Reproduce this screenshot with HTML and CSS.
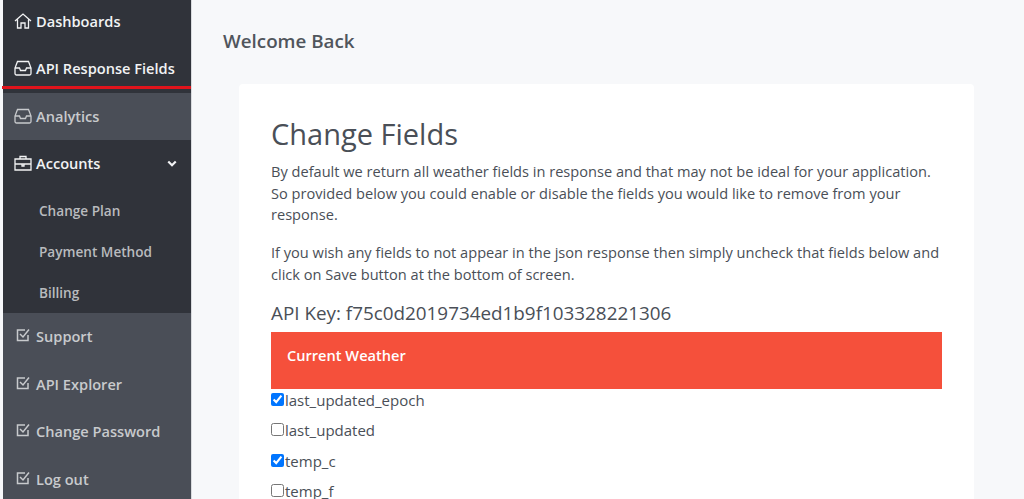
FILE: index.html
```html
<!DOCTYPE html>
<html lang="en">
<head>
<meta charset="UTF-8">
<meta name="viewport" content="width=device-width, initial-scale=1.0">
<title>Change Fields</title>
<link rel="stylesheet" href="styles.css">
</head>
<body>

<div class="container">
    <div class="sidebar">
        <a class="nav-item dark">
            <svg class="icon" viewBox="0 0 18 16"><path d="M1 8 9 1l8 7M3.500 6.500V15h3.500v-5h4v5h3.500V6.500"/></svg>
            <span>Dashboards</span>
        </a>
        <a class="nav-item dark active">
            <svg class="icon" viewBox="0 0 18 16"><path d="M3.500 1.500h11L17 8v5.500a1.500 1.500 0 0 1-1.500 1.500h-13A1.500 1.500 0 0 1 1 13.500V8zM1 8h4.500l1 2.500h5l1-2.500H17"/></svg>
            <span>API Response Fields</span>
        </a>
        <a class="nav-item muted">
            <svg class="icon" viewBox="0 0 18 16"><path d="M3.500 1.500h11L17 8v5.500a1.500 1.500 0 0 1-1.500 1.500h-13A1.500 1.500 0 0 1 1 13.500V8zM1 8h4.500l1 2.500h5l1-2.500H17"/></svg>
            <span>Analytics</span>
        </a>
        <a class="nav-item dark">
            <svg class="icon" viewBox="0 0 18 16"><path d="M1 4h16v11H1zM6 4V1.500h6V4M1 9h16M8 9v2h2V9"/></svg>
            <span>Accounts</span>
            <svg class="chevron" viewBox="0 0 12 8"><path d="M1.500 1.500 6 6l4.500-4.500"/></svg>
        </a>
        <div class="submenu">
            <a>Change Plan</a>
            <a>Payment Method</a>
            <a>Billing</a>
        </div>
        <a class="nav-item muted">
            <svg class="icon check" viewBox="0 0 14 14"><path d="M12 7v5.500H1.500V2H9M4 6l3 3 6-7.500"/></svg>
            <span>Support</span>
        </a>
        <a class="nav-item muted">
            <svg class="icon check" viewBox="0 0 14 14"><path d="M12 7v5.500H1.500V2H9M4 6l3 3 6-7.500"/></svg>
            <span>API Explorer</span>
        </a>
        <a class="nav-item muted">
            <svg class="icon check" viewBox="0 0 14 14"><path d="M12 7v5.500H1.500V2H9M4 6l3 3 6-7.500"/></svg>
            <span>Change Password</span>
        </a>
        <a class="nav-item muted">
            <svg class="icon check" viewBox="0 0 14 14"><path d="M12 7v5.500H1.500V2H9M4 6l3 3 6-7.500"/></svg>
            <span>Log out</span>
        </a>
    </div>

    <div class="main">
        <h4 class="welcome">Welcome Back</h4>
        <div class="card">
            <h2 class="title">Change Fields</h2>
            <p>By default we return all weather fields in response and that may not be ideal for your application. So provided below you could enable or disable the fields you would like to remove from your response.</p>
            <p>If you wish any fields to not appear in the json response then simply uncheck that fields below and click on Save button at the bottom of screen.</p>
            <h5 class="api-key">API Key: f75c0d2019734ed1b9f103328221306</h5>
            <div class="section-head">Current Weather</div>
            <label class="field"><input type="checkbox" checked>last_updated_epoch</label>
            <label class="field"><input type="checkbox">last_updated</label>
            <label class="field"><input type="checkbox" checked>temp_c</label>
            <label class="field"><input type="checkbox">temp_f</label>
        </div>
    </div>
</div>

</body>
</html>
```

FILE: styles.css
```css
html, body {
    margin: 0;
    height: 499px;
    overflow: hidden;
}
body {
    font-family: "Open Sans", sans-serif;
    font-size: 14.600px;
    color: #4a4f57;
    background: #f7f8fa;
}
.container {
    display: flex;
    height: 499px;
    overflow: hidden;
}
.sidebar {
    width: 188px;
    margin-left: 3px;
    margin-top: -2.500px;
    border-right: 1px solid #d9dbde;
    flex-shrink: 0;
    background: #4a4e57;
}
.nav-item {
    display: flex;
    align-items: center;
    height: 47.500px;
    padding-left: 11px;
    padding-bottom: 1px;
    box-sizing: border-box;
    font-size: 14.600px;
    font-weight: 600;
}
.nav-item.dark {
    background: #30333a;
    color: #f2f3f4;
}
.nav-item.muted {
    background: #4a4e57;
    color: #c8cacd;
}
.nav-item.active {
    position: relative;
}
.nav-item.active::after {
    content: "";
    position: absolute;
    left: -1px;
    right: 0;
    bottom: 4px;
    height: 3px;
    background: #e0141c;
}
.icon {
    width: 18px;
    height: 16px;
    margin-right: 4px;
    flex-shrink: 0;
    fill: none;
    stroke: currentColor;
    stroke-width: 1.300;
}
.icon.check {
    width: 14px;
    height: 14px;
    margin-left: 2px;
    margin-right: 6px;
    position: relative;
    top: -1px;
    stroke-width: 1.500;
}
.chevron {
    width: 10px;
    height: 7px;
    margin-left: auto;
    margin-right: 14px;
    fill: none;
    stroke: currentColor;
    stroke-width: 2.600;
}
.submenu {
    background: #30333a;
    padding-top: 2px;
    padding-bottom: 0.500px;
}
.submenu a {
    display: block;
    height: 41px;
    line-height: 41px;
    padding-left: 36px;
    font-size: 13.600px;
    font-weight: 600;
    color: #b9bbbe;
}
.main {
    flex: 1;
    padding: 0 50px 0 47px;
    min-width: 0;
}
.welcome {
    margin: 27px 0 29px -16px;
    font-size: 18.800px;
    line-height: 28px;
    font-weight: 600;
    color: #50555c;
}
.card {
    background: #fff;
    border-radius: 4px;
    padding: 31px 32px 0;
    height: 500px;
    box-sizing: border-box;
}
.title {
    margin: 0 0 8px;
    font-size: 29px;
    line-height: 38px;
    font-weight: 400;
    color: #4a4f57;
}
.card p {
    margin: 0 0 16.500px;
    line-height: 21.600px;
}
.api-key {
    margin: 0 0 8px;
    font-size: 18.850px;
    line-height: 22px;
    font-weight: 400;
}
.section-head {
    height: 57px;
    box-sizing: border-box;
    padding: 13px 16px;
    background: #f5503b;
    color: #fff;
    font-weight: 600;
}
.field {
    display: flex;
    align-items: flex-start;
    height: 30.300px;
    font-size: 15px;
    line-height: 22px;
}
.field input {
    margin: 4px 1px 0 0;
    width: 13px;
    height: 13px;
}
```
